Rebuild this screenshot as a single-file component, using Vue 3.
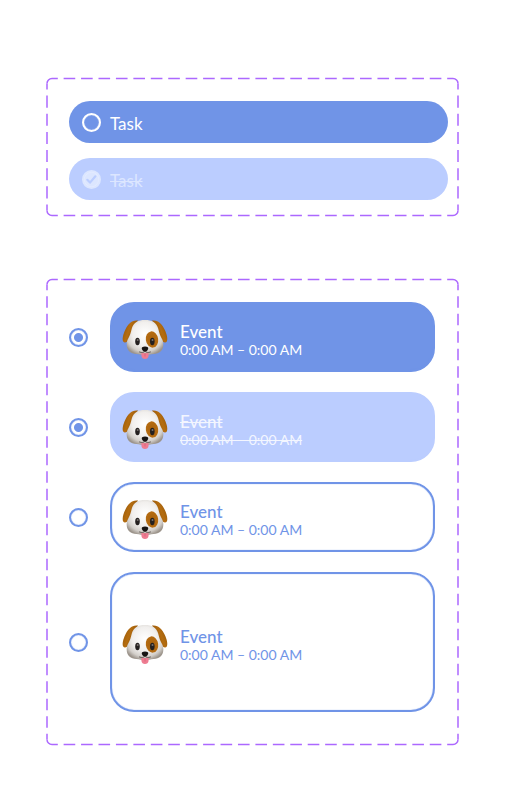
<script setup>
import { ref, reactive, onMounted, onBeforeUnmount } from 'vue'

const tasks = ref([
  { id: 'task-1', title: 'Task', done: false },
  { id: 'task-2', title: 'Task', done: true },
])

const events = [
  { id: 'event-1', look: 'filled', checked: true },
  { id: 'event-2', look: 'faded', checked: true },
  { id: 'event-3', look: 'outlined', checked: false },
  { id: 'event-4', look: 'outlined tall', checked: false },
]

// Dashed frames: every side carries a whole number of dashes, so corners stay solid.
const RADIUS = 5
const frames = reactive([{ w: 0, h: 0 }, { w: 0, h: 0 }])
const els = []
let observer

function measure() {
  els.forEach((el, i) => {
    frames[i].w = el.offsetWidth
    frames[i].h = el.offsetHeight
  })
}

function sides({ w, h }) {
  if (!w || !h) return []
  const r = RADIUS
  const t = 0.5
  const b = h - 0.5
  const make = (d, len) => ({ d, units: Math.max(1, Math.round(len / 17.5)) * 3 })
  return [
    make(`M${r} ${t}H${w - r}`, w - 2 * r),
    make(`M${w} ${t + r}V${b - r}`, b - t - 2 * r),
    make(`M${w - r} ${b}H${r}`, w - 2 * r),
    make(`M0 ${b - r}V${t + r}`, b - t - 2 * r),
  ]
}

function corners({ w, h }) {
  if (!w || !h) return ''
  const r = RADIUS
  const t = 0.5
  const b = h - 0.5
  const arc = `a${r} ${r} 0 0 1`
  return `M${w - r} ${t}${arc} ${r} ${r}M${w} ${b - r}${arc} ${-r} ${r}M${r} ${b}${arc} ${-r} ${-r}M0 ${t + r}${arc} ${r} ${-r}`
}

onMounted(() => {
  measure()
  observer = new ResizeObserver(measure)
  els.forEach((el) => observer.observe(el))
})
onBeforeUnmount(() => observer?.disconnect())
</script>

<template>
  <main class="page">
    <svg class="defs" aria-hidden="true">
      <defs>
        <radialGradient id="fur" cx="0.5" cy="0.4" r="0.62">
          <stop offset="0" stop-color="#ffffff" />
          <stop offset="0.55" stop-color="#f1efed" />
          <stop offset="0.82" stop-color="#d3cfca" />
          <stop offset="1" stop-color="#9c948b" />
        </radialGradient>
        <linearGradient id="earL" x1="0" y1="0" x2="1" y2="0.5">
          <stop offset="0" stop-color="#8d5208" />
          <stop offset="0.5" stop-color="#b56d10" />
          <stop offset="1" stop-color="#8a4f08" />
        </linearGradient>
        <linearGradient id="earR" x1="1" y1="0" x2="0" y2="0.5">
          <stop offset="0" stop-color="#8d5208" />
          <stop offset="0.5" stop-color="#b56d10" />
          <stop offset="1" stop-color="#8a4f08" />
        </linearGradient>
        <radialGradient id="patch">
          <stop offset="0" stop-color="#a8610b" />
          <stop offset="1" stop-color="#b56c12" />
        </radialGradient>
        <symbol id="dog" viewBox="0 0 46 42">
          <path d="M16 1.6C10 0.600 6 5 3.400 10.500C1 15.500 0 20 1.200 22.500C2.800 24.800 5.600 22.800 7.200 20Z" fill="url(#earL)" />
          <path d="M30 1.6C36 0.600 40 5 42.600 10.500C45 15.500 46 20 44.800 22.500C43.200 24.800 40.400 22.800 38.800 20Z" fill="url(#earR)" />
          <path d="M23 1C30 1 34.500 3.500 36.200 9.500C37.300 14 38 16.500 39.500 19C41 21.500 41.400 23.500 41.300 26C41.100 31.500 37.500 34.500 31.500 35C28.500 35.500 26 36 23 36C20 36 17.500 35.500 14.500 35C8.500 34.500 4.900 31.500 4.700 26C4.600 23.500 5 21.500 6.500 19C8 16.500 8.700 14 9.800 9.500C11.500 3.500 16 1 23 1Z" fill="url(#fur)" />
          <ellipse cx="30" cy="20.500" rx="6.200" ry="8.200" transform="rotate(-8 30 20.500)" fill="url(#patch)" />
          <ellipse cx="15.500" cy="22.500" rx="2.300" ry="3.700" fill="#24201f" />
          <ellipse cx="30.300" cy="22.500" rx="2.300" ry="3.700" fill="#24201f" />
          <ellipse cx="15.700" cy="21" rx="1" ry="0.900" fill="#77716e" />
          <ellipse cx="30.500" cy="21" rx="1" ry="0.900" fill="#77716e" />
          <path d="M19.500 33.500C21 34.500 25 34.500 26.500 33.500L26.600 36.500C26.600 41.300 19.400 41.300 19.400 36.500Z" fill="#ee7c91" />
          <path d="M23 34V37.500" stroke="#d45f78" stroke-width="0.800" />
          <path d="M17.500 33Q21.500 34.500 23 31.800Q24.500 34.500 28.500 33" fill="none" stroke="#5a504c" stroke-width="0.900" stroke-linecap="round" />
          <path d="M20.200 28.200C21.500 27.300 24.500 27.300 25.800 28.200C27 29.300 25.500 32.600 23 32.600C20.500 32.600 19 29.300 20.200 28.200Z" fill="#171413" />
        </symbol>
      </defs>
    </svg>

    <section :ref="(el) => { if (el) els[0] = el }" class="frame tasks" aria-label="Tasks">
      <svg class="dashes" aria-hidden="true">
        <path :d="corners(frames[0])" />
        <path v-for="s in sides(frames[0])" :key="s.d" :d="s.d" :pathLength="s.units" class="side" />
      </svg>
      <label v-for="task in tasks" :key="task.id" class="task" :class="{ done: task.done }" :for="task.id">
        <span class="check">
          <input :id="task.id" v-model="task.done" type="checkbox" />
          <svg v-if="task.done" viewBox="0 0 19 19" aria-hidden="true">
            <path d="M5.300 9.800L8 12.600L13.400 6.300" />
          </svg>
        </span>
        <span class="task-title">{{ task.title }}</span>
      </label>
    </section>

    <section :ref="(el) => { if (el) els[1] = el }" class="frame events" aria-label="Events">
      <svg class="dashes" aria-hidden="true">
        <path :d="corners(frames[1])" />
        <path v-for="s in sides(frames[1])" :key="s.d" :d="s.d" :pathLength="s.units" class="side" />
      </svg>
      <div v-for="event in events" :key="event.id" class="row">
        <input :id="event.id" class="radio" type="radio" :name="event.id" :checked="event.checked" />
        <label class="card" :class="event.look" :for="event.id">
          <svg class="dog" aria-hidden="true"><use href="#dog" /></svg>
          <span class="text">
            <span class="title">Event</span>
            <span class="time">0:00 AM – 0:00 AM</span>
          </span>
        </label>
      </div>
    </section>
  </main>
</template>

<style>
body {
  margin: 0;
  background: #fff;
}
</style>

<style scoped>
.page {
  --blue: #7094e7;
  --pale: #bbcdff;
  display: flex;
  flex-direction: column;
  gap: 63px;
  padding: 78px 57px 64px 47px;
  font-family: Lato, 'Liberation Sans', sans-serif;
}
.defs {
  position: absolute;
  width: 0;
  height: 0;
}
.frame {
  position: relative;
  display: flex;
  flex-direction: column;
}
.tasks {
  gap: 15px;
  padding: 23px 10px 16px 22px;
}
.events {
  gap: 20px;
  padding: 23px 23px 33px 22px;
}
.dashes {
  position: absolute;
  inset: 0;
  width: 100%;
  height: 100%;
  overflow: visible;
  pointer-events: none;
  fill: none;
  stroke: #ac68ff;
  stroke-width: 1.5;
}
.side {
  stroke-dasharray: 2 1;
  stroke-dashoffset: 1;
}
.task {
  display: flex;
  align-items: center;
  gap: 9px;
  height: 42px;
  padding: 0 13px;
  border-radius: 21px;
  background: var(--blue);
  color: #fff;
  font-size: 17px;
  line-height: 20px;
}
.task.done {
  background: var(--pale);
  color: #dce6ff;
}
.task-title {
  padding-top: 4px;
}
.done .task-title {
  text-decoration: line-through;
  text-decoration-thickness: 1px;
}
.check {
  display: grid;
}
.check > * {
  grid-area: 1 / 1;
}
.check input,
.check svg {
  width: 19px;
  height: 19px;
}
.check input {
  appearance: none;
  box-sizing: border-box;
  margin: 0;
  border: 2px solid #fff;
  border-radius: 50%;
  box-shadow: inset 0 0 1px #fff;
}
.check input:checked {
  border-color: #dce6ff;
  background: #dce6ff;
}
.check svg {
  pointer-events: none;
  fill: none;
  stroke: var(--pale);
  stroke-width: 2.2;
  stroke-linecap: round;
  stroke-linejoin: round;
}
.row {
  display: flex;
  align-items: center;
  gap: 22px;
}
.radio {
  appearance: none;
  box-sizing: border-box;
  flex: none;
  width: 19px;
  height: 19px;
  margin: 0;
  border: 2px solid var(--blue);
  border-radius: 50%;
  box-shadow: inset 0 0 1px var(--blue);
}
.radio:checked {
  background: radial-gradient(circle, var(--blue) 4px, transparent 5px);
}
.card {
  display: flex;
  flex: 1;
  align-items: center;
  gap: 12px;
  box-sizing: border-box;
  min-height: 70px;
  padding: 0 10px;
  border: 2px solid var(--blue);
  border-radius: 24px;
  box-shadow: inset 0 0 1px var(--blue);
  color: var(--blue);
}
.card.filled {
  background: var(--blue);
  color: #fff;
}
.card.faded {
  border-color: var(--pale);
  background: var(--pale);
  box-shadow: none;
  color: #f3f6ff;
}
.faded .title,
.faded .time {
  text-decoration: line-through;
  text-decoration-thickness: 1px;
}
.card.tall {
  min-height: 140px;
}
.dog {
  flex: none;
  width: 46px;
  height: 42px;
  padding-top: 6px;
}
.text {
  display: flex;
  flex-direction: column;
  align-items: flex-start;
  padding-top: 6px;
}
.title {
  font-size: 17px;
  font-weight: 500;
  line-height: 19px;
}
.time {
  font-size: 14px;
  line-height: 18px;
}
</style>
